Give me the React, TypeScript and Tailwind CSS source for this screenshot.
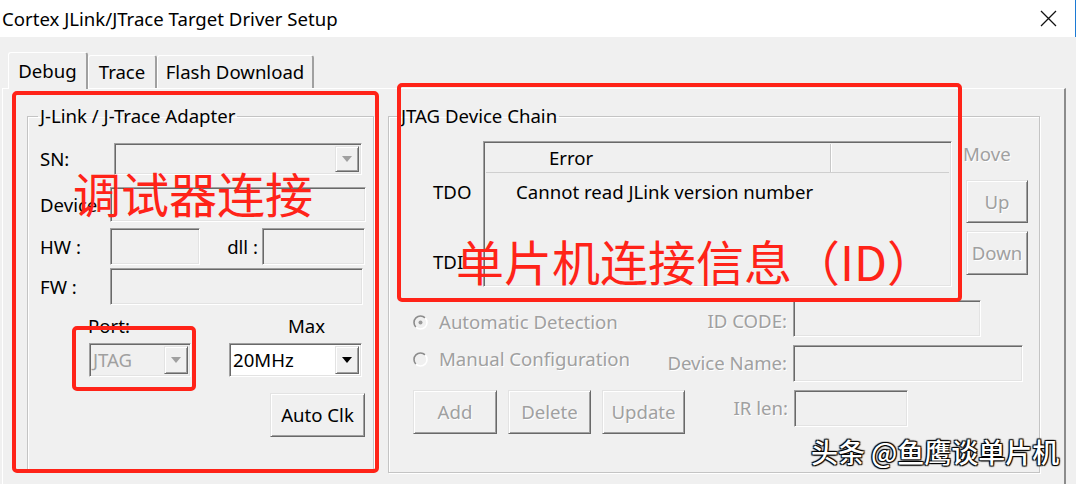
import React from "react";

/* classic win32 3d edges */
const RAISED =
  "border border-t-[#e3e3e3] border-l-[#e3e3e3] border-b-[#696969] border-r-[#696969] shadow-[inset_1px_1px_0_#fff,inset_-1px_-1px_0_#a0a0a0] bg-[#f0f0f0]";
const SUNKEN =
  "border border-t-[#a0a0a0] border-l-[#a0a0a0] border-b-white border-r-white shadow-[inset_1px_1px_0_#696969,inset_-1px_-1px_0_#e3e3e3]";
const DIS = "text-[#a0a0a0] [text-shadow:1px_1px_0_#fff]";
const GROUP =
  "m-0 p-0 min-w-0 border border-[#c4c4c4] shadow-[inset_1px_1px_0_#fff,1px_1px_0_#fff]";

function Edit({ className }: { className: string }) {
  return <div className={`${SUNKEN} bg-[#f0f0f0] ${className}`} />;
}

function Arrow({ disabled }: { disabled?: boolean }) {
  return (
    <svg width="10" height="6" viewBox="0 0 10 6">
      <path d="M0 0h10L5 6z" fill={disabled ? "#a0a0a0" : "#000"} />
    </svg>
  );
}

function Combo({ text, disabled, className }: { text?: string; disabled?: boolean; className: string }) {
  return (
    <div className={`${SUNKEN} flex items-stretch p-[2px] ${disabled ? "bg-[#f0f0f0]" : "bg-white"} ${className}`}>
      <span className={`flex flex-1 items-center pl-[1px] ${disabled ? "text-[#a0a0a0]" : "text-black"}`}>{text}</span>
      <span className={`${RAISED} flex w-[24px] items-center justify-center`}>
        <Arrow disabled={disabled} />
      </span>
    </div>
  );
}

function Button({ label, disabled, className }: { label: string; disabled?: boolean; className: string }) {
  return (
    <div className={`${RAISED} flex items-center justify-center ${disabled ? DIS : "text-black"} ${className}`}>
      {label}
    </div>
  );
}

function Radio({ checked }: { checked?: boolean }) {
  return (
    <svg width="15" height="15" viewBox="0 0 15 15" className="shrink-0">
      <circle cx="7.5" cy="7.5" r="6" fill="#f0f0f0" />
      <path d="M12.1 2.9A6.5 6.5 0 0 0 2.9 12.1" stroke="#8c8c8c" strokeWidth="1.6" fill="none" />
      <path d="M2.9 12.1A6.5 6.5 0 0 0 12.1 2.9" stroke="#fff" strokeWidth="1.6" fill="none" />
      {checked && <circle cx="7.5" cy="7.5" r="2" fill="#9a9a9a" />}
    </svg>
  );
}

function Tab({ label, selected, className }: { label: string; selected?: boolean; className: string }) {
  return (
    <div
      className={`flex items-center justify-center rounded-t-[3px] border-t border-l border-white border-r-2 border-r-[#a0a0a0] bg-[#f0f0f0] ${
        selected ? "relative z-10 -mb-[1px]" : ""
      } ${className}`}
    >
      {label}
    </div>
  );
}

export default function App() {
  return (
    <div className="relative h-[484px] w-[1076px] overflow-hidden bg-[#f0f0f0] font-['Noto_Sans','Noto_Sans_CJK_SC',sans-serif] text-[18.6px] leading-[24px] text-black">
      {/* title bar */}
      <div className="flex h-[37px] items-center justify-between border-r border-r-[#1c7ad4] bg-white pl-[2px] pr-[18px]">
        <span>Cortex JLink/JTrace Target Driver Setup</span>
        <svg width="17" height="17" viewBox="0 0 17 17">
          <path d="M1 1l15 15M16 1L1 16" stroke="#111" strokeWidth="1.3" />
        </svg>
      </div>

      {/* tabs */}
      <div className="flex items-end pl-[8px] pt-[15px]">
        <Tab label="Debug" selected className="h-[37px] w-[80px]" />
        <Tab label="Trace" className="h-[33px] w-[69px]" />
        <Tab label="Flash Download" className="h-[33px] w-[157px]" />
      </div>

      {/* tab page */}
      <div className="ml-[2px] flex h-[400px] w-[1064px] gap-[14px] border-t border-l border-white border-r-2 border-r-[#8c8c8c] pl-[24px] pt-[15px]">
        {/* adapter group */}
        <fieldset className={`${GROUP} h-[366px] w-[347px]`}>
          <legend className="ml-[10px] px-[2px] leading-[24px]">J-Link / J-Trace Adapter</legend>
          <div className="pl-[12px] pt-[15px]">
            <div className="flex h-[32px] items-center">
              <span className="w-[74px]">SN:</span>
              <Combo disabled className="h-[32px] w-[248px]" />
            </div>
            <div className="mt-[12px] flex h-[35px] items-center">
              <span className="w-[70px]">Device</span>
              <Edit className="h-[35px] w-[256px]" />
            </div>
            <div className="mt-[6px] flex h-[37px] items-center">
              <span className="w-[70px]">HW :</span>
              <Edit className="h-[37px] w-[90px]" />
              <span className="w-[62px] pr-[4px] text-right">dll :</span>
              <Edit className="h-[37px] w-[103px]" />
            </div>
            <div className="mt-[3px] flex h-[37px] items-center">
              <span className="w-[70px]">FW :</span>
              <Edit className="h-[37px] w-[253px]" />
            </div>
            <div className="mt-[9px] flex h-[24px]">
              <span className="ml-[48px] w-[200px]">Port:</span>
              <span>Max</span>
            </div>
            <div className="mt-[5px] flex">
              <Combo disabled text="JTAG" className="ml-[49px] h-[34px] w-[102px]" />
              <Combo text="20MHz" className="ml-[38px] h-[34px] w-[133px]" />
            </div>
            <Button label="Auto Clk" className="ml-[230px] mt-[16px] h-[44px] w-[95px]" />
          </div>
        </fieldset>

        {/* device chain group */}
        <fieldset className={`${GROUP} h-[369px] w-[652px]`}>
          <legend className="ml-[10px] px-[2px] leading-[24px]">JTAG Device Chain</legend>
          <div className="pt-[13px]">
            <div className="flex h-[146px] pl-[44px]">
              <div className="flex w-[50px] flex-col">
                <span className="mt-[39px]">TDO</span>
                <span className="mt-[46px]">TDI</span>
              </div>
              <div className={`${SUNKEN} h-[146px] w-[469px] bg-[#f0f0f0] p-[2px]`}>
                <div className="flex h-[29px] border-b border-b-[#cfcfcf]">
                  <div className="w-[345px] border-r border-r-[#c8c8c8] pl-[63px] pt-[2px] shadow-[1px_0_0_#fff]">Error</div>
                  <div className="flex-1" />
                </div>
                <div className="flex h-[38px] items-center pl-[30px]">Cannot read JLink version number</div>
              </div>
              <div className="ml-[11px] flex w-[66px] flex-col">
                <span className={`mt-[1px] ${DIS}`}>Move</span>
                <Button label="Up" disabled className="ml-[3px] mt-[14px] h-[43px] w-[62px]" />
                <Button label="Down" disabled className="ml-[3px] mt-[8px] h-[44px] w-[62px]" />
              </div>
            </div>

            <div className="mt-[13px] pl-[24px]">
              <div className="flex items-start">
                <div className={`mt-[10px] flex w-[237px] items-center gap-[11px] ${DIS}`}>
                  <Radio checked />
                  <span>Automatic Detection</span>
                </div>
                <span className={`mt-[9px] w-[137px] text-right ${DIS}`}>ID CODE:</span>
                <Edit className="ml-[6px] h-[37px] w-[188px]" />
              </div>
              <div className="mt-[8px] flex items-start">
                <div className={`mt-[2px] flex w-[237px] items-center gap-[11px] ${DIS}`}>
                  <Radio />
                  <span>Manual Configuration</span>
                </div>
                <span className={`mt-[6px] w-[137px] text-right ${DIS}`}>Device Name:</span>
                <Edit className="ml-[6px] h-[37px] w-[230px]" />
              </div>
              <div className="mt-[8px] flex items-start">
                <Button label="Add" disabled className="h-[44px] w-[84px]" />
                <Button label="Delete" disabled className="ml-[11px] h-[44px] w-[83px]" />
                <Button label="Update" disabled className="ml-[11px] h-[44px] w-[83px]" />
                <span className={`mt-[6px] w-[103px] text-right ${DIS}`}>IR len:</span>
                <Edit className="ml-[6px] h-[37px] w-[114px]" />
              </div>
            </div>
          </div>
        </fieldset>
      </div>

      {/* red annotations */}
      <div className="absolute left-[12px] top-[91px] h-[382px] w-[367px] rounded-[5px] border-4 border-[#ff2318]" />
      <div className="absolute left-[397px] top-[83px] h-[219px] w-[565px] rounded-[5px] border-4 border-[#ff2318]" />
      <div className="absolute left-[72px] top-[326px] h-[65px] w-[124px] rounded-[5px] border-4 border-[#ff2318]" />
      <div className="absolute left-[73px] top-[168px] font-['Noto_Sans_CJK_SC',sans-serif] text-[48px] leading-[48px] text-[#ff2318]">
        调试器连接
      </div>
      <div className="absolute left-[456px] top-[236px] font-['Noto_Sans_CJK_SC',sans-serif] text-[48px] leading-[48px] text-[#ff2318]">
        单片机连接信息（ID）
      </div>

      {/* watermark */}
      <div className="absolute left-[811px] top-[437px] font-['Noto_Sans_CJK_SC',sans-serif] text-[27px] font-medium leading-[30px] text-white [text-shadow:0_0_1px_#000,1px_1px_1px_#000,-1px_-1px_1px_#000,1px_-1px_1px_#000,-1px_1px_1px_#000]">
        头条 @鱼鹰谈单片机
      </div>
    </div>
  );
}
